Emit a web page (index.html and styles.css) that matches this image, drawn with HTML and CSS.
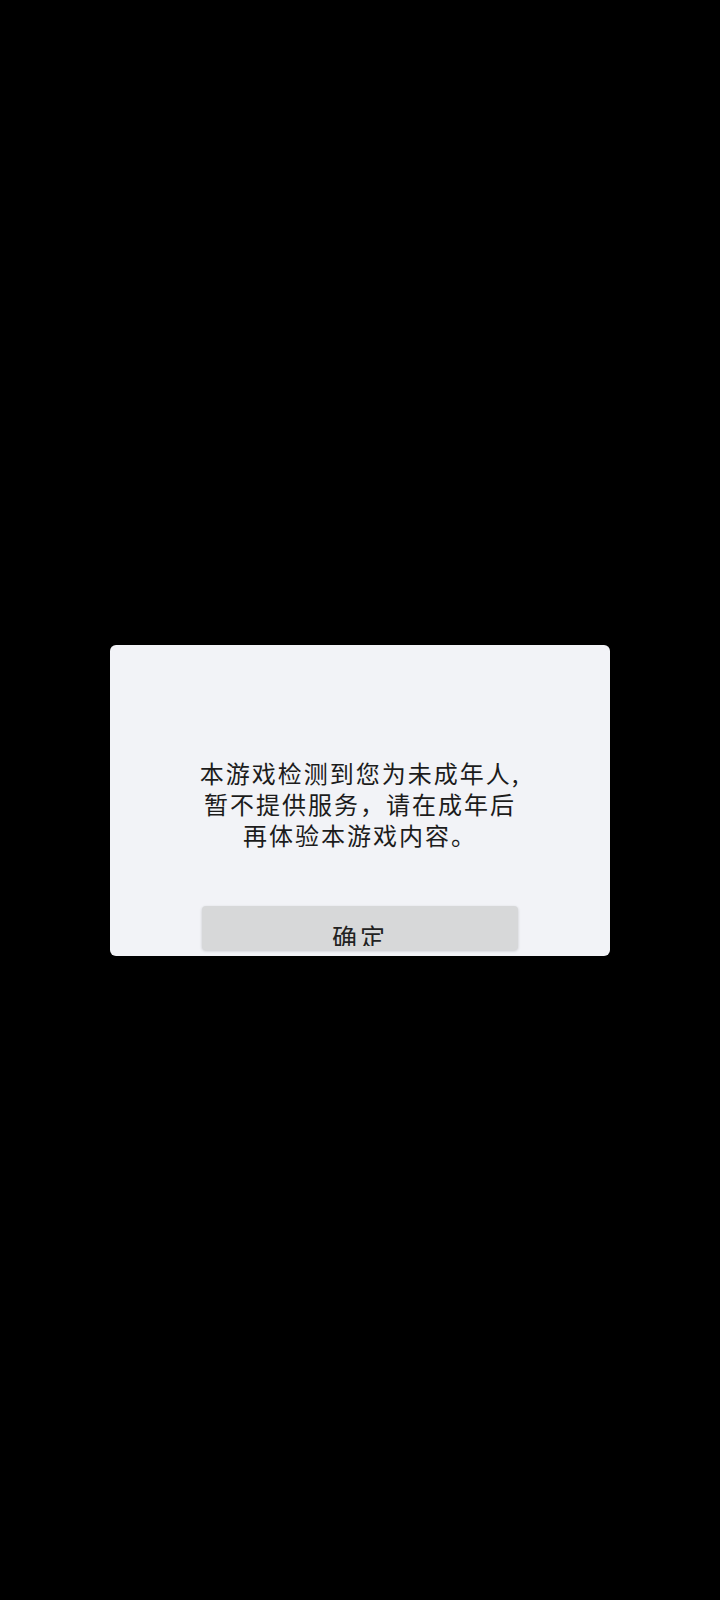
FILE: index.html
```html
<!DOCTYPE html>
<html lang="zh-CN">
<head>
    <meta charset="UTF-8">
    <meta name="viewport" content="width=device-width, initial-scale=1.0">
    <title>提示</title>
    <link rel="stylesheet" href="styles.css">
</head>
<body>

    <!-- 未成年人提示弹窗 -->
    <div class="dialog">
        <p class="message">本游戏检测到您为未成年人,<br>暂不提供服务，请在成年后<br>再体验本游戏内容。</p>
        <button class="confirm"><span class="label">确定</span></button>
    </div>

</body>
</html>
```

FILE: styles.css
```css
body {
    font-family: "Noto Sans CJK SC", "Noto Sans", sans-serif;
    display: flex;
    justify-content: center;
    align-items: center;
    height: 1600px;
    margin: 0;
    background-color: #000;
}

.dialog {
    box-sizing: border-box;
    width: 500px;
    height: 311px;
    padding: 112px 0 6px;
    background-color: #f2f3f7;
    border-radius: 6px;
    display: flex;
    flex-direction: column;
    align-items: center;
}

.message {
    margin: 0;
    font-size: 24px;
    line-height: 31px;
    letter-spacing: 2px;
    text-align: center;
    color: #1c1c1c;
}

.confirm {
    width: 316px;
    height: 44px;
    margin-top: auto;
    padding: 14px 0 0;
    border: none;
    border-radius: 4px;
    background-color: #d7d8d9;
    box-shadow: 0 1px 3px rgba(0, 0, 0, 0.18);
    font-family: inherit;
    color: #222;
    cursor: pointer;
}

.label {
    display: block;
    height: 22px;
    overflow: hidden;
    font-size: 25px;
    line-height: 24px;
    letter-spacing: 3px;
}
```
